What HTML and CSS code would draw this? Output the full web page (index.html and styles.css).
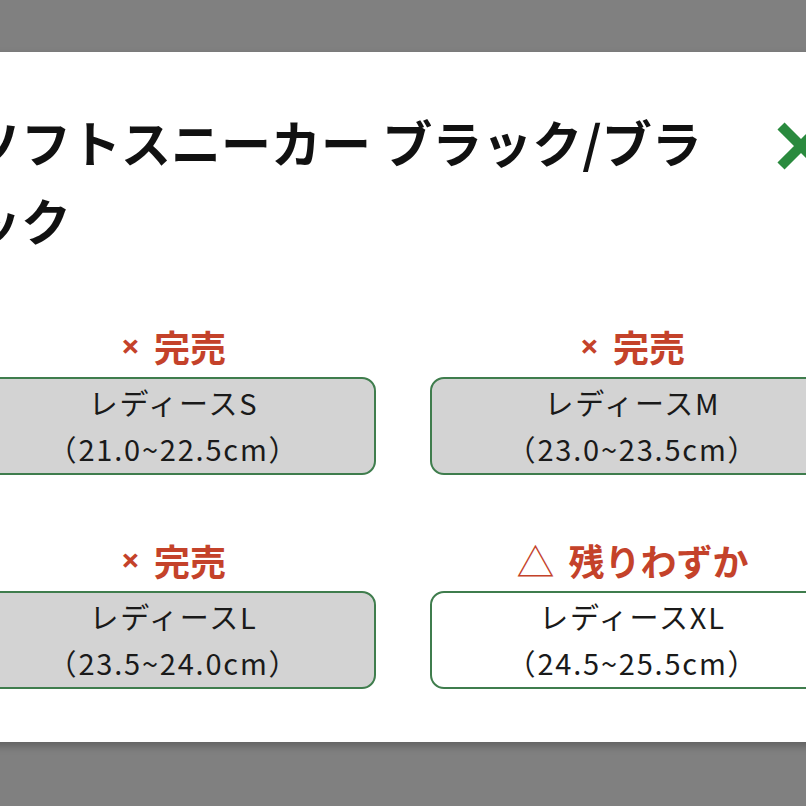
FILE: index.html
```html
<!DOCTYPE html>
<html lang="ja">
<head>
<meta charset="utf-8">
<title>サイズ選択</title>
<link rel="stylesheet" href="styles.css">
</head>
<body>
<div class="overlay">
  <div class="modal">
    <div class="header">
      <h1 class="title">ソフトスニーカー ブラック/ブラック</h1>
      <button class="close" aria-label="閉じる">
        <svg viewBox="0 0 48 48" width="48" height="48">
          <path d="M4 4 L44 44 M44 4 L4 44" stroke="#2a8a3e" stroke-width="10" stroke-linecap="butt"/>
        </svg>
      </button>
    </div>
    <div class="sizes">
      <div class="size">
        <div class="status"><span class="mark">×</span><span>完売</span></div>
        <div class="option soldout">レディースS<br>（21.0~22.5cm）</div>
      </div>
      <div class="size">
        <div class="status"><span class="mark">×</span><span>完売</span></div>
        <div class="option soldout">レディースM<br>（23.0~23.5cm）</div>
      </div>
      <div class="size">
        <div class="status"><span class="mark">×</span><span>完売</span></div>
        <div class="option soldout">レディースL<br>（23.5~24.0cm）</div>
      </div>
      <div class="size">
        <div class="status"><span class="tri">△</span><span>残りわずか</span></div>
        <div class="option">レディースXL<br>（24.5~25.5cm）</div>
      </div>
    </div>
  </div>
</div>
</body>
</html>
```
FILE: styles.css
```css
html, body {
  margin: 0;
  padding: 0;
}
body {
  background: #808080;
  overflow: hidden;
  width: 806px;
  height: 806px;
  font-family: "Noto Sans CJK JP", "Noto Sans", sans-serif;
}
.overlay {
  padding-top: 52px;
}
.modal {
  background: #ffffff;
  width: 864px;
  height: 640px;
  margin-left: -59px;
  padding: 50px 30px 0 30px;
  box-shadow: 0 4px 8px rgba(0, 0, 0, 0.25);
}
.header {
  display: flex;
  align-items: flex-start;
  gap: 30px;
  padding-right: 10px;
}
.title {
  flex: 1;
  margin: 0;
  font-size: 50px;
  font-weight: 700;
  line-height: 78px;
  color: #111111;
}
.close {
  flex: none;
  margin-top: 20px;
  padding: 0;
  border: none;
  background: none;
  width: 48px;
  height: 48px;
}
.close svg {
  display: block;
}
.sizes {
  margin-top: 69px;
  display: grid;
  grid-template-columns: 405px 405px;
  column-gap: 54px;
  row-gap: 66px;
}
.size {
  display: flex;
  flex-direction: column;
  gap: 6px;
}
.status {
  box-sizing: border-box;
  display: flex;
  justify-content: center;
  align-items: center;
  gap: 14px;
  height: 44px;
  padding-bottom: 6px;
  font-size: 36px;
  font-weight: 700;
  line-height: 44px;
  color: #c4422a;
}
.mark {
  font-family: "Noto Sans", sans-serif;
  font-size: 33px;
  line-height: 44px;
}
.tri {
  font-weight: 400;
  font-size: 38px;
}
.option {
  border: 2px solid #3f7d4d;
  border-radius: 14px;
  background: #ffffff;
  padding: 0 0 2px;
  text-align: center;
  font-size: 29px;
  letter-spacing: 1.8px;
  line-height: 46px;
  color: #1a1a1a;
}
.option.soldout {
  background: #d3d3d3;
}
```
